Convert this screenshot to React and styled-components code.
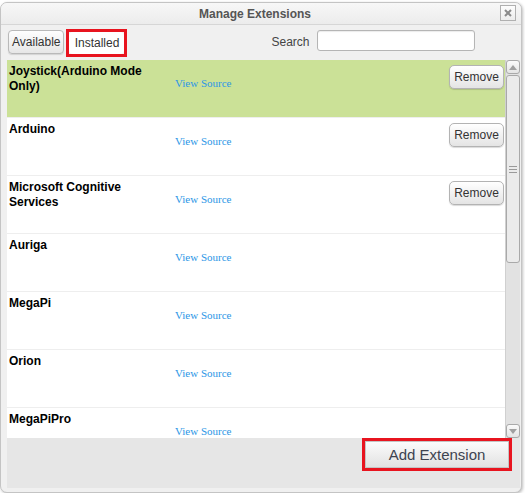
import React from "react";
import styled, { createGlobalStyle } from "styled-components";

const GlobalStyle = createGlobalStyle`
  html, body {
    margin: 0;
    padding: 0;
    background: #ffffff;
    font-family: "Liberation Sans", Arial, sans-serif;
  }
`;

const Dialog = styled.div`
  box-sizing: border-box;
  width: 522px;
  height: 491px;
  margin-top: 2px;
  background: #f0f0f0;
  border: 1px solid #c4c4c4;
  border-radius: 7px;
  box-shadow: 1px 1px 3px rgba(0, 0, 0, 0.25);
  display: flex;
  flex-direction: column;
  overflow: hidden;
`;

const TitleBar = styled.div`
  position: relative;
  height: 21px;
  flex: none;
  display: flex;
  align-items: center;
  justify-content: center;
  padding-right: 12px;
  background: linear-gradient(#f7f7f7, #ececec);
  border-bottom: 1px solid #d6d6d6;
  font-size: 12px;
  font-weight: bold;
  color: #555555;
`;

const CloseButton = styled.div`
  position: absolute;
  right: 5px;
  top: 2px;
  width: 14px;
  height: 14px;
  border: 1px solid #b0b0b0;
  background: linear-gradient(#fdfdfd, #ececec);
  display: flex;
  align-items: center;
  justify-content: center;
`;

const Toolbar = styled.div`
  height: 33px;
  flex: none;
  display: flex;
  align-items: center;
  padding-left: 7px;
  padding-bottom: 2px;
`;

const TabButton = styled.div`
  box-sizing: border-box;
  height: ${(p) => (p.$active ? "22px" : "24px")};
  width: ${(p) => (p.$active ? "55px" : "auto")};
  padding: 0 3px;
  display: flex;
  align-items: center;
  justify-content: center;
  font-size: 12px;
  color: #333333;
  border-radius: 4px;
  border: 1px solid ${(p) => (p.$active ? "transparent" : "#b9b9b9")};
  background: ${(p) =>
    p.$active ? "#ffffff" : "linear-gradient(#fefefe, #e6e6e6)"};
  box-shadow: ${(p) => (p.$active ? "none" : "0 1px 1px rgba(0,0,0,0.12)")};
`;

const Highlight = styled.div`
  box-sizing: border-box;
  border: 3px solid #e8141f;
  display: flex;
  align-items: center;
  justify-content: center;
  margin-left: ${(p) => p.$ml || "0"};
  margin-top: ${(p) => p.$mt || "0"};
`;

const SearchLabel = styled.span`
  margin-left: 144px;
  font-size: 12px;
  color: #444444;
`;

const SearchInput = styled.div`
  box-sizing: border-box;
  width: 158px;
  height: 21px;
  margin-left: 7px;
  margin-top: -3px;
  background: #ffffff;
  border: 1px solid #b5b5b5;
  border-radius: 3px;
  box-shadow: inset 0 1px 1px rgba(0, 0, 0, 0.08);
`;

const Body = styled.div`
  height: 378px;
  flex: none;
  display: flex;
  padding: 0 0 0 6px;
`;

const List = styled.div`
  width: 498px;
  background: #ffffff;
  overflow: hidden;
`;

const Row = styled.div`
  box-sizing: border-box;
  height: 58px;
  display: flex;
  align-items: flex-start;
  padding-left: 2px;
  background: ${(p) => (p.$selected ? "#cbe197" : "#ffffff")};
  border-bottom: 1px solid #eeeeee;
`;

const Name = styled.div`
  width: 152px;
  flex: none;
  padding: 4px 14px 0 0;
  font-size: 12px;
  font-weight: bold;
  line-height: 15px;
  color: #000000;
`;

const SourceLink = styled.a`
  margin-top: 17px;
  font-family: "Liberation Serif", "Times New Roman", serif;
  font-size: 11px;
  color: #2b96e6;
  text-decoration: none;
`;

const RemoveButton = styled.div`
  box-sizing: border-box;
  margin: 5px 1px 0 auto;
  width: 55px;
  height: 24px;
  display: flex;
  align-items: center;
  justify-content: center;
  font-size: 12px;
  color: #333333;
  border: 1px solid #b3b3b3;
  border-radius: 5px;
  background: linear-gradient(#ffffff, #e4e4e4);
  box-shadow: 0 1px 1px rgba(0, 0, 0, 0.15);
`;

const Scrollbar = styled.div`
  width: 14px;
  flex: none;
  display: flex;
  flex-direction: column;
  background: #e2e2e2;
  border-left: 1px solid #d0d0d0;
`;

const Arrow = styled.div`
  box-sizing: border-box;
  height: 14px;
  flex: none;
  border: 1px solid #a9a9a9;
  border-radius: 3px;
  background: linear-gradient(#fafafa, #e4e4e4);
  display: flex;
  align-items: center;
  justify-content: center;
`;

const Thumb = styled.div`
  box-sizing: border-box;
  height: 188px;
  margin-top: 1px;
  border: 1px solid #a9a9a9;
  border-radius: 3px;
  background: #ebebeb;
  display: flex;
  flex-direction: column;
  align-items: center;
  justify-content: center;
  gap: 2px;
`;

const Grip = styled.div`
  width: 8px;
  height: 1px;
  background: #9a9a9a;
`;

const Spacer = styled.div`
  flex: 1;
`;

const Footer = styled.div`
  height: 50px;
  flex: none;
  margin: 0 1px 0 6px;
  background: #e6e6e6;
  display: flex;
  justify-content: flex-end;
  align-items: flex-start;
  padding-right: 8px;
`;

const AddButton = styled.div`
  box-sizing: border-box;
  width: 144px;
  height: 27px;
  display: flex;
  align-items: center;
  justify-content: center;
  font-size: 15px;
  color: #3d4350;
  border: 1px solid #c4c4c4;
  background: linear-gradient(#fbfbfb, #e2e2e2);
`;

const extensions = [
  { name: "Joystick(Arduino Mode Only)", removable: true, selected: true },
  { name: "Arduino", removable: true },
  { name: "Microsoft Cognitive Services", removable: true },
  { name: "Auriga" },
  { name: "MegaPi" },
  { name: "Orion" },
  { name: "MegaPiPro" },
];

const Caret = ({ up }) => (
  <svg width="8" height="5" viewBox="0 0 8 5">
    <path d={up ? "M0 5 L4 0 L8 5 Z" : "M0 0 L4 5 L8 0 Z"} fill="#a0a0a0" />
  </svg>
);

export default function App() {
  return (
    <>
      <GlobalStyle />
      <Dialog>
        <TitleBar>
          Manage Extensions
          <CloseButton>
            <svg width="8" height="8" viewBox="0 0 8 8">
              <path
                d="M1 1 L7 7 M7 1 L1 7"
                stroke="#8a8a8a"
                strokeWidth="2"
              />
            </svg>
          </CloseButton>
        </TitleBar>
        <Toolbar>
          <TabButton>Available</TabButton>
          <Highlight $ml="2px" $mt="2px">
            <TabButton $active>Installed</TabButton>
          </Highlight>
          <SearchLabel>Search</SearchLabel>
          <SearchInput />
        </Toolbar>
        <Body>
          <List>
            {extensions.map((ext) => (
              <Row key={ext.name} $selected={ext.selected}>
                <Name>{ext.name}</Name>
                <SourceLink href="#">View Source</SourceLink>
                {ext.removable && <RemoveButton>Remove</RemoveButton>}
              </Row>
            ))}
          </List>
          <Scrollbar>
            <Arrow>
              <Caret up />
            </Arrow>
            <Thumb>
              <Grip />
              <Grip />
              <Grip />
            </Thumb>
            <Spacer />
            <Arrow>
              <Caret />
            </Arrow>
          </Scrollbar>
        </Body>
        <Footer>
          <Highlight>
            <AddButton>Add Extension</AddButton>
          </Highlight>
        </Footer>
      </Dialog>
    </>
  );
}
